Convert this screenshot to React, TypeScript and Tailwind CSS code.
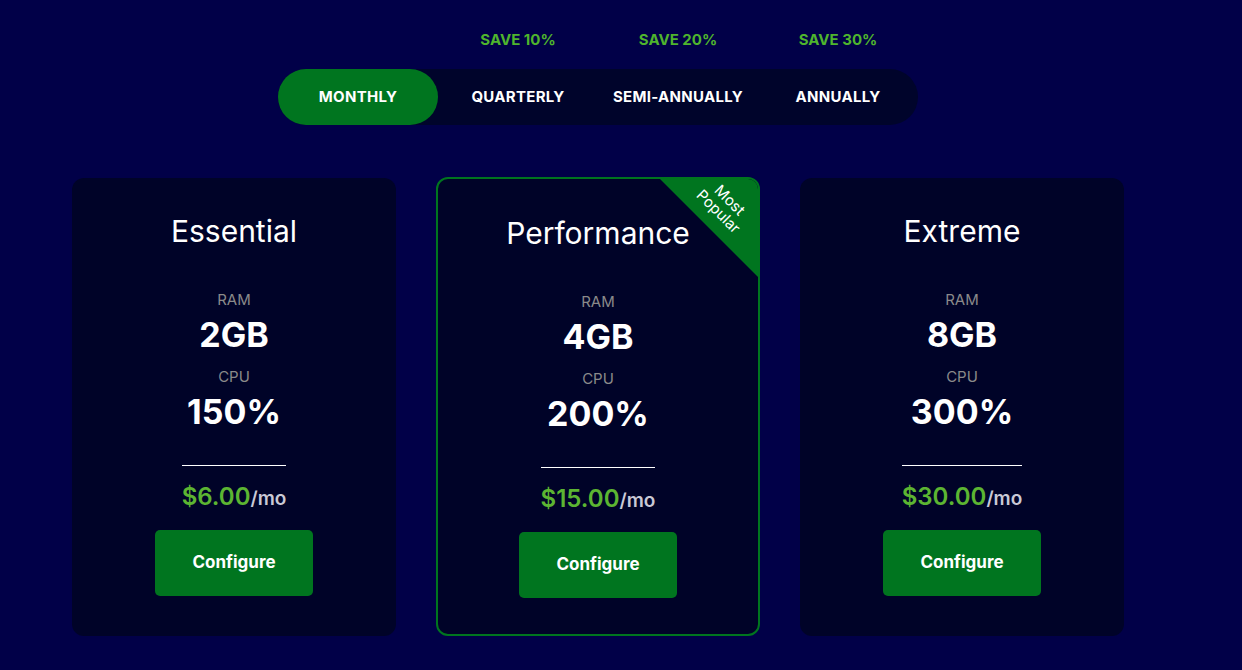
import React, { useState } from 'react';

type Plan = {
  name: string;
  ram: string;
  cpu: string;
  price: string;
  popular?: boolean;
};

const cycles = [
  { label: 'Monthly', save: '' },
  { label: 'Quarterly', save: 'Save 10%' },
  { label: 'Semi-Annually', save: 'Save 20%' },
  { label: 'Annually', save: 'Save 30%' },
];

const plans: Plan[] = [
  { name: 'Essential', ram: '2GB', cpu: '150%', price: '$6.00' },
  { name: 'Performance', ram: '4GB', cpu: '200%', price: '$15.00', popular: true },
  { name: 'Extreme', ram: '8GB', cpu: '300%', price: '$30.00' },
];

function PlanCard({ plan }: { plan: Plan }) {
  return (
    <div
      className={`relative w-[324px] overflow-hidden rounded-xl bg-[#000328] flex flex-col items-center ${
        plan.popular ? 'border-2 border-[#00751f] pt-[33px] pb-[36px]' : 'pt-[32px] pb-[40px]'
      }`}
    >
      {plan.popular && (
        <>
          <div className="absolute right-0 top-0 h-[98px] w-[98px] bg-[#00751f] [clip-path:polygon(0_0,100%_0,100%_100%)]" />
          <div className="absolute left-[246px] top-[11px] w-[80px] rotate-45 text-center text-[15px] leading-[16px] text-white">
            Most
            <br />
            Popular
          </div>
        </>
      )}
      <h3 className="text-[30px] leading-[42px] font-normal text-white">{plan.name}</h3>
      <p className="mt-[38px] text-[15px] leading-[20px] text-[#8a8a8a]">RAM</p>
      <p className="mt-[5px] text-[34px] leading-[40px] font-bold text-white">{plan.ram}</p>
      <p className="mt-[12px] text-[15px] leading-[20px] text-[#8a8a8a]">CPU</p>
      <p className="mt-[5px] text-[34px] leading-[40px] font-bold text-white">{plan.cpu}</p>
      <div className="mt-[33px] border-t border-white pt-[15px] leading-[32px]">
        <span className="text-[24px] font-semibold text-[#5cb532]">{plan.price}</span>
        <span className="text-[19px] font-semibold text-[#c9c9d6]">/mo</span>
      </div>
      <button className="mt-[15px] h-[66px] w-[158px] rounded-[5px] bg-[#00751f] text-[17px] font-bold text-white">
        Configure
      </button>
    </div>
  );
}

export default function App() {
  const [active, setActive] = useState(0);

  return (
    <div
      className="min-h-[670px] w-full bg-[#010048] pr-[46px] flex flex-col items-center"
      style={{ fontFamily: 'Inter, "Open Sans", sans-serif' }}
    >
      {/* discount labels sit over their billing tabs */}
      <div className="mt-[30px] flex">
        {cycles.map((c) => (
          <div key={c.label} className="w-[160px] text-center text-[15px] leading-[20px] font-bold uppercase text-[#4fb52d]">
            {c.save}
          </div>
        ))}
      </div>

      <div className="mt-[19px] flex h-[56px] rounded-full bg-[#00042b]">
        {cycles.map((c, i) => (
          <button
            key={c.label}
            onClick={() => setActive(i)}
            className={`h-[56px] w-[160px] rounded-full text-[15px] font-bold uppercase tracking-[0.3px] text-white ${
              active === i ? 'bg-[#00751f]' : ''
            }`}
          >
            {c.label}
          </button>
        ))}
      </div>

      <div className="mt-[52px] flex items-end gap-[40px]">
        {plans.map((p) => (
          <PlanCard key={p.name} plan={p} />
        ))}
      </div>
    </div>
  );
}
